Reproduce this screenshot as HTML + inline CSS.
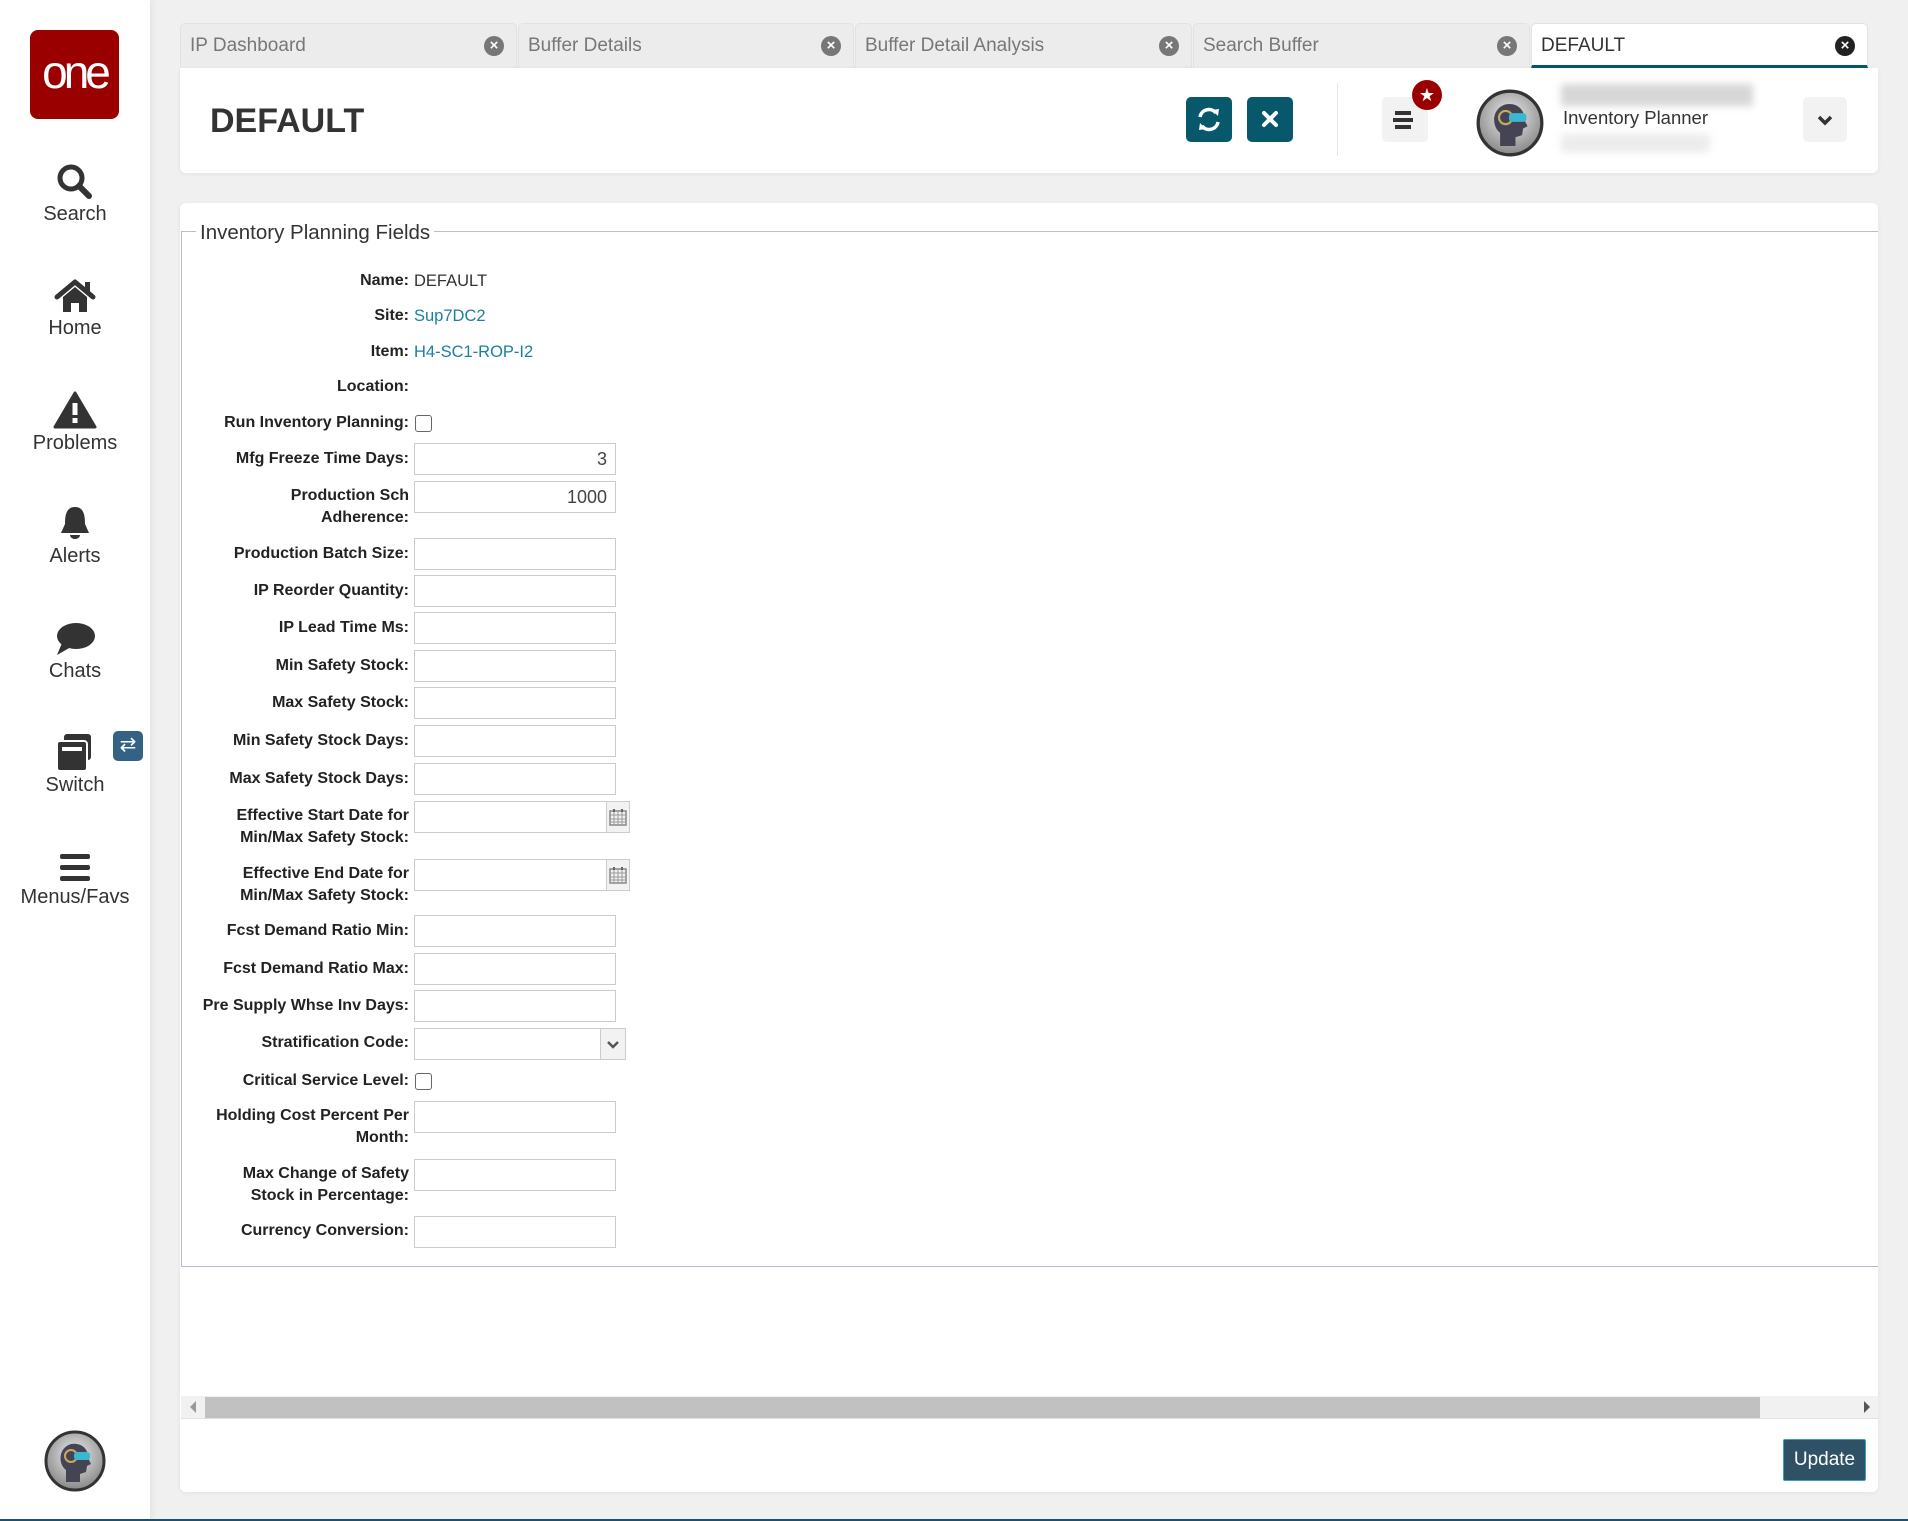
<!DOCTYPE html>
<html><head><meta charset="utf-8"><style>
*{box-sizing:border-box;margin:0;padding:0}
body{width:1908px;height:1521px;background:#f0f0f0;font-family:"Liberation Sans",sans-serif;position:relative;overflow:hidden;color:#333}
.abs{position:absolute}
.side{left:0;top:0;width:150px;height:1521px;background:#fff;box-shadow:2px 0 6px rgba(0,0,0,.06)}
.nav{position:absolute;left:0;width:150px;text-align:center;font-size:20px;color:#333}
.nav svg{display:block;margin:0 auto 3px}
.tab{position:absolute;top:23px;height:45px;background:#ececec;border:1px solid #e2e2e2;border-bottom:none;border-radius:5px 5px 0 0;font-size:19px;color:#777;line-height:44px;padding-left:9px}
.tab .x{position:absolute;right:12px;top:12px;width:20px;height:20px;border-radius:50%;background:#777;color:#fff;font-size:15px;line-height:20px;text-align:center;font-weight:bold}
.card{background:#fff;border-radius:6px;box-shadow:0 1px 4px rgba(0,0,0,.06)}
.lbl{position:absolute;left:180px;width:229px;text-align:right;font-weight:bold;font-size:16px;line-height:22px;color:#222}
.val{position:absolute;left:414px;font-size:16.5px;line-height:22px;color:#333}
.inp{position:absolute;left:414px;width:202px;height:32px;border:1px solid #ccc;background:#fff;text-align:right;font-size:18px;line-height:30px;padding-right:8px;color:#444}
.cb{position:absolute;left:415px;width:17px;height:17px;border:1.5px solid #666;border-radius:3px;background:#fff}
.cal{position:absolute;left:606px;width:24px;height:32px;border:1px solid #ccc;background:#f2f2f2}
.btn{position:absolute;width:46px;height:45px;border-radius:5px}
</style></head><body>
<div class="abs side"></div>
<div class="abs" style="left:30px;top:30px;width:89px;height:89px;background:#9b0000;border-radius:8px;color:#fff;font-size:46px;text-align:center;line-height:84px;letter-spacing:-4px;font-family:'Liberation Sans',sans-serif">one</div>

<div class="nav" style="top:164px"><svg width="40" height="36" viewBox="0 0 40 36"><circle cx="16" cy="14" r="11" fill="none" stroke="#333" stroke-width="5"/><path d="M24 22 L34 32" stroke="#333" stroke-width="6" stroke-linecap="round"/></svg><div>Search</div></div>
<div class="nav" style="top:278px"><svg width="44" height="36" viewBox="0 0 44 36"><path d="M4 19 L22 4 L40 19" fill="none" stroke="#333" stroke-width="5" stroke-linecap="round" stroke-linejoin="round"/><rect x="32" y="4" width="5" height="10" fill="#333"/><path d="M10 19 L22 9 L34 19 V34 H26 V25 H18 V34 H10Z" fill="#333"/></svg><div>Home</div></div>
<div class="nav" style="top:391px"><svg width="44" height="38" viewBox="0 0 44 38"><path d="M22 2 L42 36 H2Z" fill="#333" stroke="#333" stroke-width="3" stroke-linejoin="round"/><rect x="19.5" y="12" width="5" height="12" fill="#fff"/><rect x="19.5" y="27" width="5" height="5" fill="#fff"/></svg><div>Problems</div></div>
<div class="nav" style="top:504px"><svg width="36" height="38" viewBox="0 0 36 38"><path d="M18 3 C9 3 8 12 8 20 L4 29 H32 L28 20 C28 12 27 3 18 3Z" fill="#333"/><path d="M13 31 H23 A5 4 0 0 1 13 31Z" fill="#333"/></svg><div>Alerts</div></div>
<div class="nav" style="top:621px"><svg width="42" height="36" viewBox="0 0 42 36"><ellipse cx="22" cy="15" rx="19" ry="13" fill="#333"/><path d="M8 22 L3 34 L17 26Z" fill="#333"/></svg><div>Chats</div></div>
<div class="nav" style="top:733px"><svg width="44" height="38" viewBox="0 0 44 38"><rect x="11" y="1" width="27" height="26" rx="3" fill="#333"/><rect x="4" y="8" width="30" height="30" rx="3" fill="#333" stroke="#fff" stroke-width="2"/><rect x="9" y="14" width="20" height="4" fill="#fff"/></svg><div>Switch</div></div>
<div class="abs" style="left:113px;top:731px;width:30px;height:30px;background:#346285;border-radius:5px;color:#fff;text-align:center;font-size:20px;line-height:29px">⇄</div>
<div class="nav" style="top:851px"><svg width="36" height="32" viewBox="0 0 36 32"><rect x="3" y="3" width="30" height="5" rx="2" fill="#333"/><rect x="3" y="14" width="30" height="5" rx="2" fill="#333"/><rect x="3" y="25" width="30" height="5" rx="2" fill="#333"/></svg><div>Menus/Favs</div></div>
<svg class="abs" style="left:44px;top:1430px" width="62" height="62" viewBox="0 0 62 62"><defs><radialGradient id="g1" cx="50%" cy="40%" r="60%"><stop offset="0" stop-color="#eee"/><stop offset="1" stop-color="#888"/></radialGradient></defs><circle cx="31" cy="31" r="29" fill="url(#g1)" stroke="#333" stroke-width="3"/><path d="M22 52 L22 40 C14 34 14 18 27 14 C38 12 45 20 44 28 L47 34 L43 36 L42 42 L36 44 L36 52Z" fill="#445"/><circle cx="27" cy="26" r="6" fill="none" stroke="#c9a860" stroke-width="2"/><rect x="30" y="22" width="16" height="8" rx="3" fill="#3bb7d0"/></svg>

<div class="tab" style="left:180px;width:337px">IP Dashboard<span class="x">×</span></div>
<div class="tab" style="left:518px;width:336px">Buffer Details<span class="x">×</span></div>
<div class="tab" style="left:855px;width:337px">Buffer Detail Analysis<span class="x">×</span></div>
<div class="tab" style="left:1193px;width:337px">Search Buffer<span class="x">×</span></div>
<div class="tab" style="left:1531px;width:337px;background:#fff;color:#333;border-bottom:3px solid #07566b">DEFAULT<span class="x" style="background:#222">×</span></div>

<div class="abs card" style="left:180px;top:68px;width:1698px;height:105px;border-radius:0 0 6px 6px"></div>
<div class="abs" style="left:210px;top:102px;font-size:34px;font-weight:bold;color:#333">DEFAULT</div>
<div class="btn" style="left:1186px;top:97px;background:#07586b"><svg width="46" height="45" viewBox="0 0 46 45"><path d="M14 20 A9 9 0 0 1 30 16 M32 25 A9 9 0 0 1 16 29" fill="none" stroke="#fff" stroke-width="3.5"/><path d="M26 13 L33 12 L32 19Z M20 32 L13 33 L14 26Z" fill="#fff"/></svg></div>
<div class="btn" style="left:1247px;top:97px;background:#07586b"><svg width="46" height="45" viewBox="0 0 46 45"><path d="M17 16 L29 28 M29 16 L17 28" stroke="#fff" stroke-width="4" stroke-linecap="round"/></svg></div>
<div class="abs" style="left:1337px;top:83px;width:1px;height:73px;background:#e6e6e6"></div>
<div class="btn" style="left:1382px;top:97px;background:#f2f2f2"><svg width="46" height="45" viewBox="0 0 46 45"><rect x="13" y="14" width="16" height="4" fill="#333"/><rect x="11" y="21" width="20" height="4" fill="#333"/><rect x="13" y="28" width="16" height="4" fill="#333"/></svg></div>
<div class="abs" style="left:1412px;top:80px;width:30px;height:30px;border-radius:50%;background:#9b0000;color:#fff;text-align:center;font-size:18px;line-height:30px">★</div>
<svg class="abs" style="left:1476px;top:89px" width="68" height="68" viewBox="0 0 62 62"><circle cx="31" cy="31" r="29" fill="url(#g1)" stroke="#333" stroke-width="3"/><path d="M22 52 L22 40 C14 34 14 18 27 14 C38 12 45 20 44 28 L47 34 L43 36 L42 42 L36 44 L36 52Z" fill="#445"/><circle cx="27" cy="26" r="6" fill="none" stroke="#c9a860" stroke-width="2"/><rect x="30" y="22" width="16" height="8" rx="3" fill="#3bb7d0"/></svg>
<div class="abs" style="left:1561px;top:84px;width:192px;height:22px;background:#d6d6d6;filter:blur(4px)"></div>
<div class="abs" style="left:1563px;top:107px;font-size:18.5px;color:#333">Inventory Planner</div>
<div class="abs" style="left:1561px;top:134px;width:149px;height:18px;background:#ececec;filter:blur(4px)"></div>
<div class="btn" style="left:1803px;top:97px;width:44px;background:#f2f2f2"><svg width="44" height="45" viewBox="0 0 44 45"><path d="M16 20 L22 26 L28 20" fill="none" stroke="#333" stroke-width="3.5"/></svg></div>

<div class="abs card" style="left:180px;top:203px;width:1698px;height:1289px"></div>
<div class="abs" style="left:181px;top:231px;width:1697px;height:1036px;border-left:1px solid #b8bcd0;border-top:1px solid #b8bcd0;border-bottom:1px solid #b8bcd0"></div>
<div class="abs" style="left:196px;top:221px;background:#fff;padding:0 4px;font-size:20.5px;color:#333">Inventory Planning Fields</div>

<div class="lbl" style="top:270px">Name:</div><div class="val" style="top:270px">DEFAULT</div>
<div class="lbl" style="top:305px">Site:</div><div class="val" style="top:305px;color:#1b7fa3">Sup7DC2</div>
<div class="lbl" style="top:341px">Item:</div><div class="val" style="top:341px;color:#1b7fa3">H4-SC1-ROP-I2</div>
<div class="lbl" style="top:376px">Location:</div>
<div class="lbl" style="top:412px">Run Inventory Planning:</div><div class="cb" style="top:415px"></div>
<div class="lbl" style="top:448px">Mfg Freeze Time Days:</div><div class="inp" style="top:443px">3</div>
<div class="lbl" style="top:485px">Production Sch<br>Adherence:</div><div class="inp" style="top:481px">1000</div>
<div class="lbl" style="top:543px">Production Batch Size:</div><div class="inp" style="top:538px"></div>
<div class="lbl" style="top:580px">IP Reorder Quantity:</div><div class="inp" style="top:575px"></div>
<div class="lbl" style="top:617px">IP Lead Time Ms:</div><div class="inp" style="top:612px"></div>
<div class="lbl" style="top:655px">Min Safety Stock:</div><div class="inp" style="top:650px"></div>
<div class="lbl" style="top:692px">Max Safety Stock:</div><div class="inp" style="top:687px"></div>
<div class="lbl" style="top:730px">Min Safety Stock Days:</div><div class="inp" style="top:725px"></div>
<div class="lbl" style="top:768px">Max Safety Stock Days:</div><div class="inp" style="top:763px"></div>
<div class="lbl" style="top:805px">Effective Start Date for<br>Min/Max Safety Stock:</div><div class="inp" style="top:801px;width:193px"></div><div class="cal" style="top:801px"><svg width="22" height="30" viewBox="0 0 22 30"><rect x="3" y="9" width="16" height="14" fill="none" stroke="#888" stroke-width="1.5"/><path d="M3 13 H19 M3 17 H19 M3 20 H19 M7 9 V23 M11 9 V23 M15 9 V23" stroke="#999"/><path d="M7 7 V10 M15 7 V10" stroke="#666" stroke-width="2"/></svg></div>
<div class="lbl" style="top:863px">Effective End Date for<br>Min/Max Safety Stock:</div><div class="inp" style="top:859px;width:193px"></div><div class="cal" style="top:859px"><svg width="22" height="30" viewBox="0 0 22 30"><rect x="3" y="9" width="16" height="14" fill="none" stroke="#888" stroke-width="1.5"/><path d="M3 13 H19 M3 17 H19 M3 20 H19 M7 9 V23 M11 9 V23 M15 9 V23" stroke="#999"/><path d="M7 7 V10 M15 7 V10" stroke="#666" stroke-width="2"/></svg></div>
<div class="lbl" style="top:920px">Fcst Demand Ratio Min:</div><div class="inp" style="top:915px"></div>
<div class="lbl" style="top:958px">Fcst Demand Ratio Max:</div><div class="inp" style="top:953px"></div>
<div class="lbl" style="top:995px">Pre Supply Whse Inv Days:</div><div class="inp" style="top:990px"></div>
<div class="lbl" style="top:1032px">Stratification Code:</div><div class="inp" style="top:1028px;width:211px"></div><div class="cal" style="top:1028px;left:600px;width:26px"><svg width="24" height="30" viewBox="0 0 24 30"><path d="M7 13 L12 18 L17 13" fill="none" stroke="#555" stroke-width="2.5"/></svg></div>
<div class="lbl" style="top:1070px">Critical Service Level:</div><div class="cb" style="top:1073px"></div>
<div class="lbl" style="top:1105px">Holding Cost Percent Per<br>Month:</div><div class="inp" style="top:1101px"></div>
<div class="lbl" style="top:1163px">Max Change of Safety<br>Stock in Percentage:</div><div class="inp" style="top:1159px"></div>
<div class="lbl" style="top:1220px">Currency Conversion:</div><div class="inp" style="top:1216px"></div>

<div class="abs" style="left:181px;top:1396px;width:1697px;height:23px;background:#f1f1f1;border-bottom:1px solid #e0e0e0"></div>
<div class="abs" style="left:205px;top:1397px;width:1555px;height:21px;background:#c1c1c1"></div>
<div class="abs" style="left:190px;top:1401px;width:0;height:0;border-top:6px solid transparent;border-bottom:6px solid transparent;border-right:6px solid #999"></div>
<div class="abs" style="left:1864px;top:1401px;width:0;height:0;border-top:6px solid transparent;border-bottom:6px solid transparent;border-left:6px solid #555"></div>
<div class="abs" style="left:1783px;top:1439px;width:83px;height:42px;background:#2e5166;border:1px solid #3aa0c0;border-radius:2px;color:#fff;font-size:19px;text-align:center;line-height:40px">Update</div>
<div class="abs" style="left:0;top:1519px;width:1908px;height:2px;background:#1f4f6a"></div>
</body></html>
